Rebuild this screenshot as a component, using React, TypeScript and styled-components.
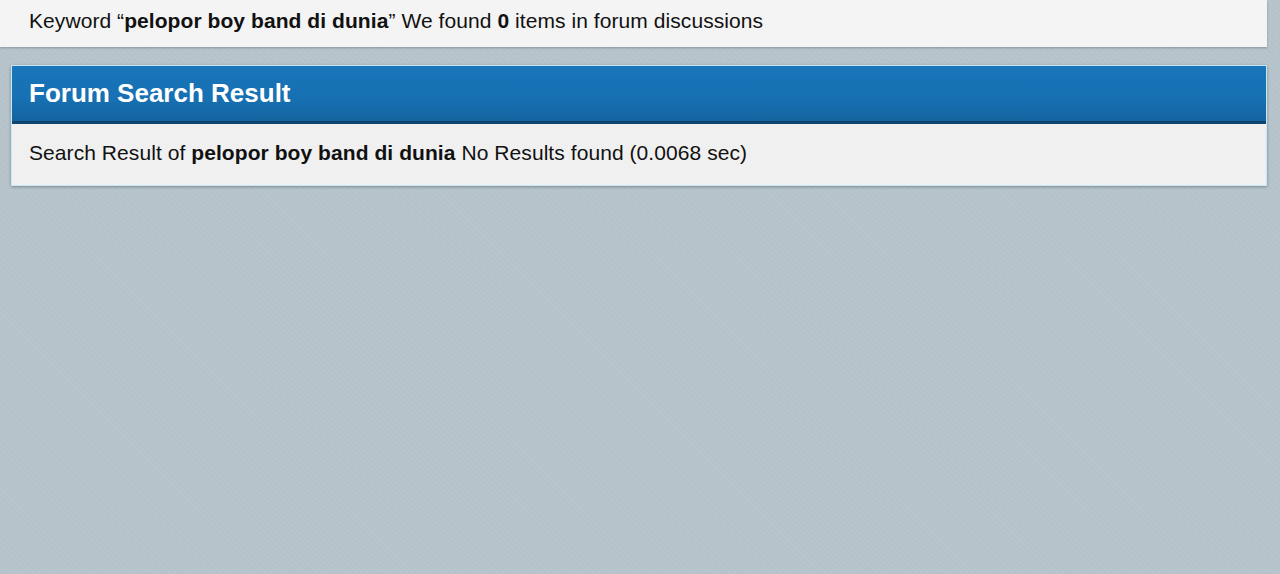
import React from "react";
import styled, { createGlobalStyle } from "styled-components";

const GlobalStyle = createGlobalStyle`
	html, body {
		margin: 0;
		padding: 0;
	}
	body {
		background: #b7c4cc;
		font-family: Arial, "Liberation Sans", sans-serif;
		color: #111;
	}
`;

const Page = styled.div`
	min-height: 574px;
	box-sizing: border-box;
	padding: 0 13px 0 0;
	background-color: #b7c4cc;
	background-image: repeating-linear-gradient(
		45deg,
		rgba(255, 255, 255, 0.015) 0 2px,
		rgba(0, 0, 0, 0.01) 2px 4px
	);
	display: flex;
	flex-direction: column;
	gap: 18px;
`;

const KeywordBar = styled.div`
	height: 47px;
	box-sizing: border-box;
	background: #f4f4f4;
	padding: 9px 29px 0;
	font-size: 21px;
	line-height: 24px;
	letter-spacing: 0.07px;
	box-shadow: 0 1px 2px rgba(0, 0, 0, 0.25);
	b {
		font-weight: bold;
	}
`;

const Card = styled.section`
	margin-left: 11px;
	border: 1px solid #c6e8f6;
	box-shadow: 0 1px 3px rgba(0, 0, 0, 0.3);
	background: #f0f0f0;
`;

const CardHeader = styled.h2`
	margin: 0;
	height: 58px;
	box-sizing: border-box;
	padding: 12px 17px 0;
	background: linear-gradient(to bottom, #1a76ba 0%, #1670b2 60%, #13649f 100%);
	border-bottom: 3px solid #0d4570;
	color: #fff;
	font-size: 26px;
	font-weight: bold;
	line-height: 30px;
`;

const CardBody = styled.div`
	height: 61px;
	box-sizing: border-box;
	padding: 17px 17px 0;
	font-size: 21px;
	line-height: 24px;
	letter-spacing: 0.07px;
	b {
		font-weight: bold;
	}
`;

export default function App() {
	const keyword = "pelopor boy band di dunia";
	return (
		<>
			<GlobalStyle />
			<Page>
				<KeywordBar>
					Keyword “<b>{keyword}</b>” We found <b>0</b> items in forum discussions
				</KeywordBar>
				<Card>
					<CardHeader>Forum Search Result</CardHeader>
					<CardBody>
						Search Result of <b>{keyword}</b> No Results found (0.0068 sec)
					</CardBody>
				</Card>
			</Page>
		</>
	);
}
